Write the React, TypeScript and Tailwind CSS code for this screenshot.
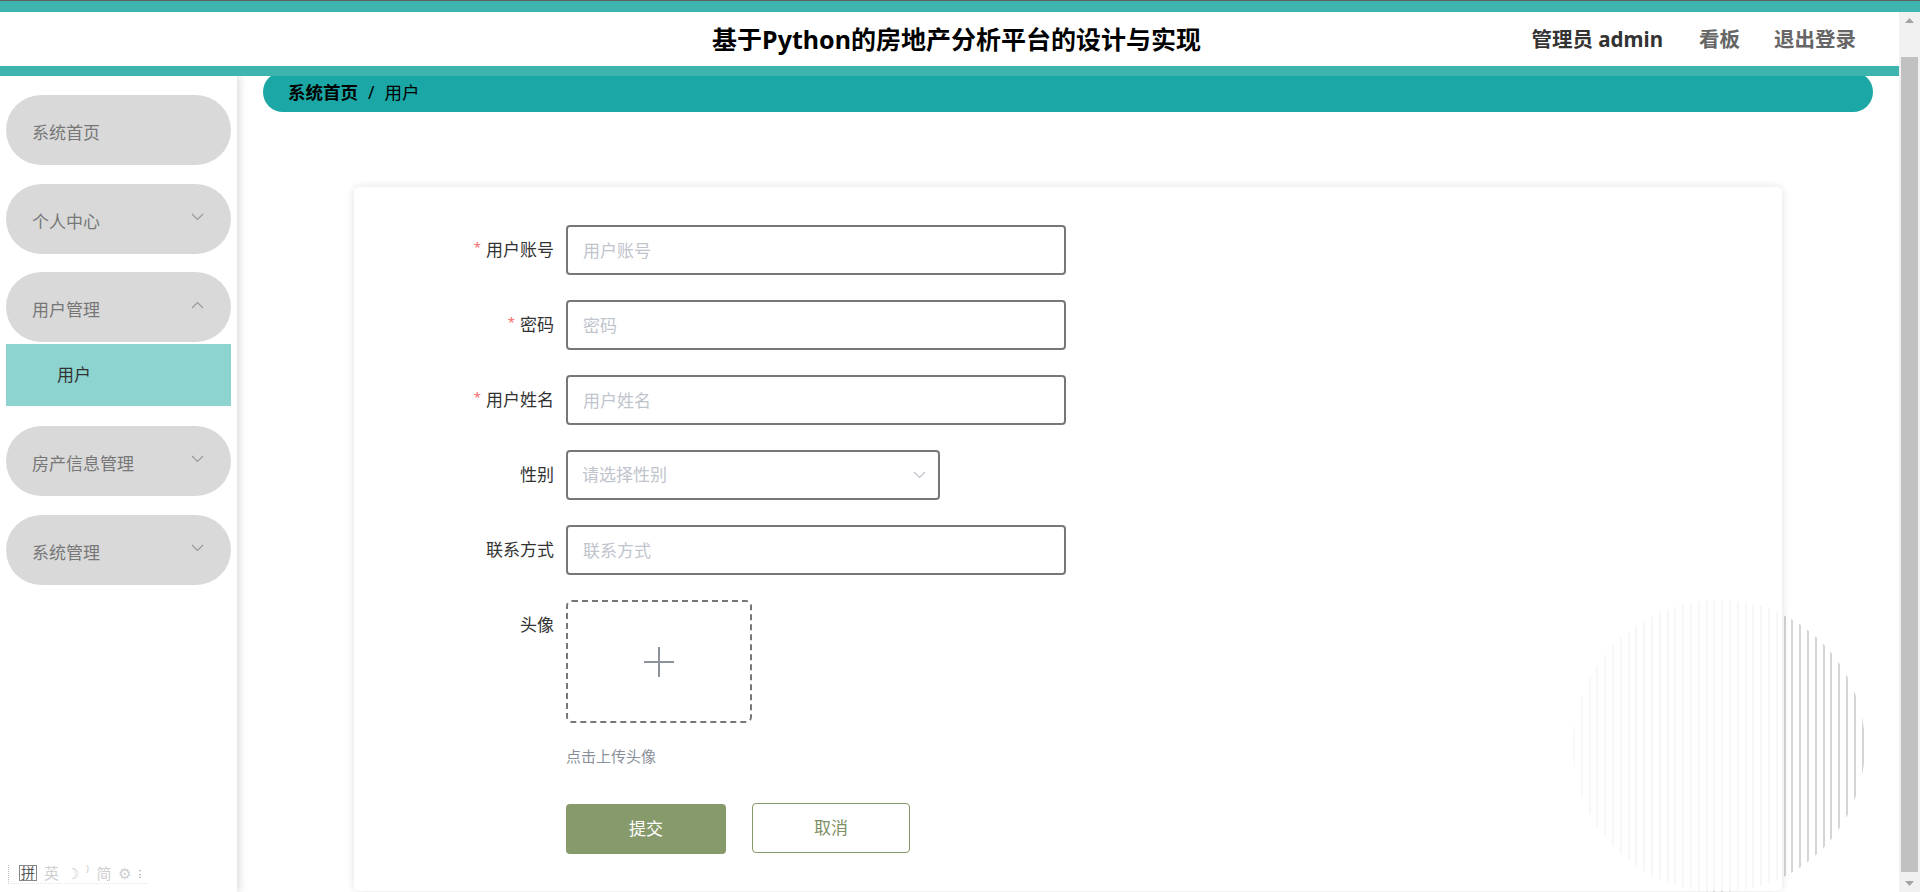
import React from 'react';

const FONT = { fontFamily: '"Noto Sans", "Noto Sans CJK SC", sans-serif' };

const Chevron: React.FC<{ up?: boolean; className?: string }> = ({ up, className }) => (
  <svg width="13" height="8" viewBox="0 0 13 8" className={className}>
    <path d={up ? 'M1 7 L6.5 1.5 L12 7' : 'M1 1 L6.5 6.5 L12 1'} fill="none" stroke="currentColor" strokeWidth="1.2" />
  </svg>
);

const Pill: React.FC<{ label: string; arrow?: 'up' | 'down' }> = ({ label, arrow }) => (
  <div className="mx-[6px] h-[70px] rounded-full bg-[#d9d9d9] flex items-center justify-between pl-[26px] pr-[27px]">
    <span className="text-[17px] text-[#777] pt-[5px]">{label}</span>
    {arrow && <Chevron up={arrow === 'up'} className="text-[#9a9a9a] -mt-[4px]" />}
  </div>
);

const Field: React.FC<{ label: string; required?: boolean; children: React.ReactNode }> = ({ label, required, children }) => (
  <div className="flex items-center mb-[25px]">
    <div className="w-[212px] pr-[12px] flex justify-end items-center text-[17px] text-[#333]">
      {required && <span className="text-[#f56c6c] text-[13px] mr-[5px] -mt-[5px]">*</span>}
      {label}
    </div>
    {children}
  </div>
);

const TextInput: React.FC<{ placeholder: string }> = ({ placeholder }) => (
  <input
    placeholder={placeholder}
    className="w-[500px] h-[50px] border-2 border-[#777] rounded-[4px] px-[15px] text-[17px] text-[#333] placeholder:text-[#c0c4cc] outline-none bg-white"
    style={FONT}
  />
);

export default function App() {
  return (
    <div className="w-[1920px] h-[892px] overflow-hidden flex flex-col bg-white" style={FONT}>
      <div className="h-px bg-[#5f5f5f]" />
      <div className="h-[11px] bg-[#3db5ae]" />
      <div className="flex flex-1 min-h-0">
        <div className="flex-1 min-w-0 flex flex-col">
          {/* header */}
          <div className="h-[54px] grid grid-cols-[1fr_auto_1fr] items-center bg-white">
            <div />
            <div className="text-[25px] font-bold text-black leading-none pl-[14px]">基于Python的房地产分析平台的设计与实现</div>
            <div className="flex justify-end items-center pr-[43px] text-[20.5px] font-bold leading-none">
              <span className="text-[#333]">管理员 admin</span>
              <span className="text-[#666] ml-[36px]">看板</span>
              <span className="text-[#666] ml-[34px]">退出登录</span>
            </div>
          </div>
          <div className="h-[10px] bg-[#3db5ae] relative z-10" />

          <div className="flex flex-1 min-h-0">
            {/* sidebar */}
            <div className="w-[237px] shrink-0 relative z-[5] bg-white shadow-[3px_0_7px_rgba(0,0,0,0.13)] pt-[19px]">
              <Pill label="系统首页" />
              <div className="h-[19px]" />
              <Pill label="个人中心" arrow="down" />
              <div className="h-[18px]" />
              <Pill label="用户管理" arrow="up" />
              <div className="mx-[6px] mt-[2px] h-[62px] bg-[#8dd3d0] flex items-center pl-[51px] text-[17px] text-[#333]">用户</div>
              <div className="h-[20px]" />
              <Pill label="房产信息管理" arrow="down" />
              <div className="h-[19px]" />
              <Pill label="系统管理" arrow="down" />

              <div className="absolute left-[8px] bottom-[8px] flex items-center gap-[7px] border-l border-dotted border-[#bbb] pl-[10px] pr-[6px] border-b border-b-[#e6e6e6] pb-[2px] text-[15px] leading-none text-[#cfcfcf]">
                <span className="border border-[#888] text-[#555] text-[14px] px-[1px]">拼</span>
                <span>英</span>
                <span>☽</span>
                <span>⁾</span>
                <span>简</span>
                <span>⚙</span>
                <span className="text-[#999] text-[11px]">⁝</span>
              </div>
            </div>

            {/* main */}
            <div className="flex-1 min-w-0 relative bg-white">
              <div className="mx-[26px] -mt-[4px] h-[40px] rounded-full bg-[#1ba7a5] flex items-center pl-[25px] text-[17.5px] text-black">
                <span className="font-bold">系统首页</span>
                <span className="mx-[10px]">/</span>
                <span>用户</span>
              </div>

              <div className="absolute left-[1336px] top-[524px] w-[292px] h-[292px] rounded-full bg-[repeating-linear-gradient(90deg,#d5d5d5_0px,#d5d5d5_2px,transparent_2px,transparent_7.8px)]" />

              <div className="relative mx-[117px] mt-[75px] h-[704px] rounded-[6px] bg-white/[0.8] shadow-[0_0_10px_rgba(0,0,0,0.12)] pt-[38px]">
                <Field label="用户账号" required><TextInput placeholder="用户账号" /></Field>
                <Field label="密码" required><TextInput placeholder="密码" /></Field>
                <Field label="用户姓名" required><TextInput placeholder="用户姓名" /></Field>
                <Field label="性别">
                  <div className="w-[374px] h-[50px] border-2 border-[#777] rounded-[4px] px-[14px] flex items-center justify-between bg-white">
                    <span className="text-[17px] text-[#c0c4cc]">请选择性别</span>
                    <Chevron className="text-[#c0c4cc] mr-[-2px]" />
                  </div>
                </Field>
                <Field label="联系方式"><TextInput placeholder="联系方式" /></Field>

                <div className="flex mt-[1px]">
                  <div className="w-[212px] pr-[12px] text-right text-[17px] text-[#333] leading-[50px]">头像</div>
                  <div>
                    <div className="w-[186px] h-[123px] border-2 border-dashed border-[#777] rounded-[6px] flex items-center justify-center bg-white">
                      <svg width="32" height="32" viewBox="0 0 32 32">
                        <path d="M16 1 V31 M1 16 H31" stroke="#8c939d" strokeWidth="2" fill="none" />
                      </svg>
                    </div>
                    <div className="mt-[23px] text-[15px] leading-[20px] text-[#8a909a]">点击上传头像</div>
                    <div className="flex mt-[38px]">
                      <button className="w-[160px] h-[50px] rounded-[4px] bg-[#879a6b] text-white text-[17px]" style={FONT}>提交</button>
                      <button className="w-[158px] h-[50px] ml-[26px] -mt-[1px] rounded-[4px] border border-[#879a6b] bg-white text-[#7d8f63] text-[17px]" style={FONT}>取消</button>
                    </div>
                  </div>
                </div>
              </div>
            </div>
          </div>
        </div>

        {/* scrollbar */}
        <div className="w-[21px] shrink-0 bg-[#f1f1f1] flex flex-col">
          <div className="h-[17px] flex items-center justify-center">
            <svg width="9" height="5" viewBox="0 0 9 5"><path d="M0 5 L4.5 0 L9 5 Z" fill="#a3a3a3" /></svg>
          </div>
          <div className="h-[28px]" />
          <div className="flex-1 mx-[2px] bg-[#c1c1c1]" />
          <div className="h-[3px]" />
          <div className="h-[17px] flex items-center justify-center">
            <svg width="9" height="5" viewBox="0 0 9 5"><path d="M0 0 L4.5 5 L9 0 Z" fill="#a3a3a3" /></svg>
          </div>
        </div>
      </div>
    </div>
  );
}
